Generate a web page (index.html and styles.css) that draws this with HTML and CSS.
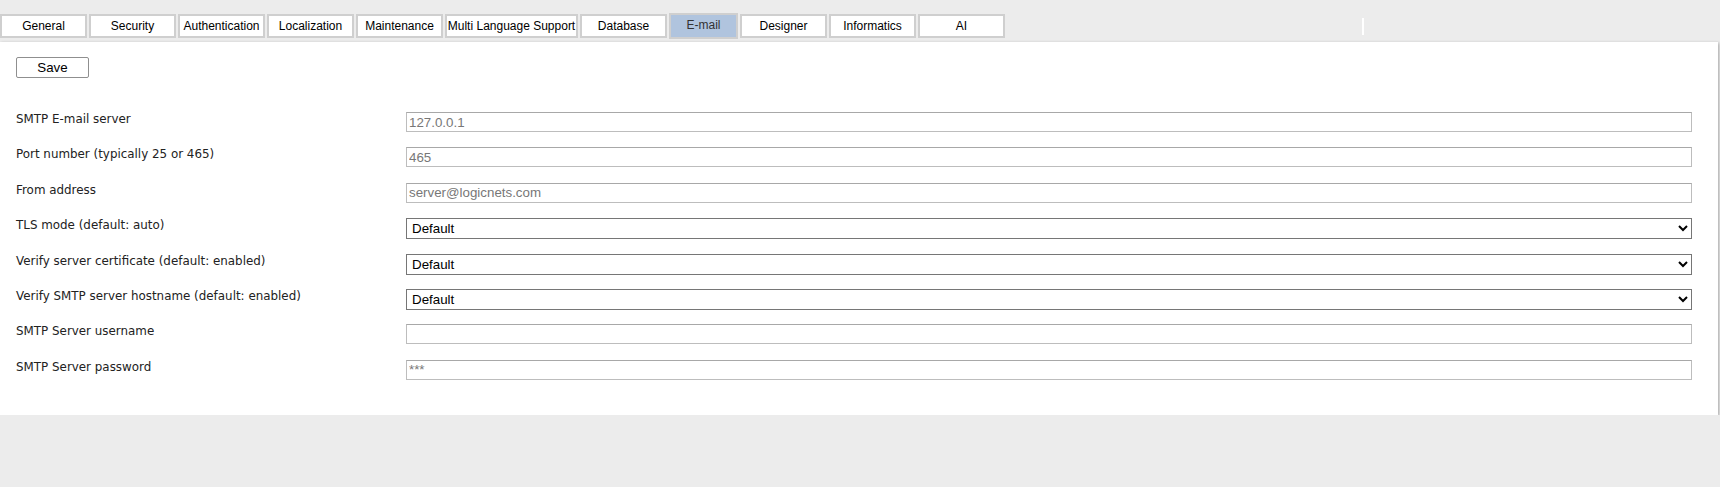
FILE: index.html
```html
<!DOCTYPE html>
<html lang="en">
<head>
    <meta charset="UTF-8">
    <meta name="viewport" content="width=device-width, initial-scale=1.0">
    <title>Settings - E-mail</title>
    <link rel="stylesheet" href="styles.css">
</head>
<body>

    <!-- Tabs -->
    <div class="tabbar">
        <div class="tab">General</div>
        <div class="tab">Security</div>
        <div class="tab">Authentication</div>
        <div class="tab">Localization</div>
        <div class="tab">Maintenance</div>
        <div class="tab tab-wide">Multi Language Support</div>
        <div class="tab">Database</div>
        <div class="tab tab-small active">E-mail</div>
        <div class="tab">Designer</div>
        <div class="tab">Informatics</div>
        <div class="tab">AI</div>
        <span class="tab-sep"></span>
    </div>

    <!-- E-mail settings -->
    <div class="panel">
        <button class="save-btn">Save</button>

        <div class="form">
            <div class="form-row">
                <label>SMTP E-mail server</label>
                <input type="text" placeholder="127.0.0.1">
            </div>
            <div class="form-row">
                <label>Port number (typically 25 or 465)</label>
                <input type="text" placeholder="465">
            </div>
            <div class="form-row">
                <label>From address</label>
                <input type="text" placeholder="server@logicnets.com">
            </div>
            <div class="form-row">
                <label>TLS mode (default: auto)</label>
                <select><option>Default</option></select>
            </div>
            <div class="form-row">
                <label>Verify server certificate (default: enabled)</label>
                <select><option>Default</option></select>
            </div>
            <div class="form-row">
                <label>Verify SMTP server hostname (default: enabled)</label>
                <select><option>Default</option></select>
            </div>
            <div class="form-row">
                <label>SMTP Server username</label>
                <input type="text">
            </div>
            <div class="form-row">
                <label>SMTP Server password</label>
                <input type="password" placeholder="***">
            </div>
        </div>
    </div>

</body>
</html>
```

FILE: styles.css
```css
* {
    box-sizing: border-box;
}

body {
    margin: 0;
    background-color: #ececec;
    font-family: "Liberation Sans", Arial, sans-serif;
    font-size: 12px;
    color: #000;
}

/* tab bar */
.tabbar {
    display: flex;
    align-items: flex-start;
    gap: 2px;
    height: 42px;
    padding-top: 14px;
}

.tab {
    width: 87px;
    height: 24px;
    line-height: 20px;
    text-align: center;
    background-color: #fff;
    border: 2px solid #cfcfcf;
    font-size: 12px;
    white-space: nowrap;
    cursor: pointer;
}

.tab-wide {
    width: 133px;
}

.tab-small {
    width: 69px;
}

.tab.active {
    background-color: #b0c4de;
    color: #333;
    height: 26px;
    margin-top: -1px;
}

.tab-sep {
    width: 2px;
    height: 17px;
    margin-top: 4px;
    margin-left: 355px;
    background-color: #fff;
}

/* panel */
.panel {
    margin-right: 2px;
    background-color: #fff;
    box-shadow: 1px 1px 3px rgba(0, 0, 0, 0.3);
    padding: 15px 26px 20px 16px;
}

.save-btn {
    width: 73px;
    height: 21px;
    padding: 0;
    background-color: #fff;
    border: 1px solid #8f8f8f;
    border-radius: 2px;
    font-family: "Liberation Sans", Arial, sans-serif;
    font-size: 13.33px;
    color: #000;
}

.form {
    margin-top: 34px;
}

.form-row {
    display: flex;
    align-items: flex-start;
    height: 35.4px;
}

.form-row label {
    width: 390px;
    flex-shrink: 0;
    font-family: "DejaVu Sans", Verdana, sans-serif;
    font-size: 11.9px;
    color: #222;
}

.form-row input,
.form-row select {
    flex: 1;
    height: 20px;
    margin: 0;
    font-family: "Liberation Sans", Arial, sans-serif;
    font-size: 13.33px;
}

.form-row input {
    padding: 1px 2px;
    border: 1px solid #bdbdbd;
    border-top-color: #a8a8a8;
    color: #666;
}

.form-row input::placeholder {
    color: #777;
}

.form-row select {
    height: 21px;
    padding: 0 1px;
    border: 1px solid #767676;
    border-radius: 0;
    background-color: #fff;
    color: #000;
}
```
